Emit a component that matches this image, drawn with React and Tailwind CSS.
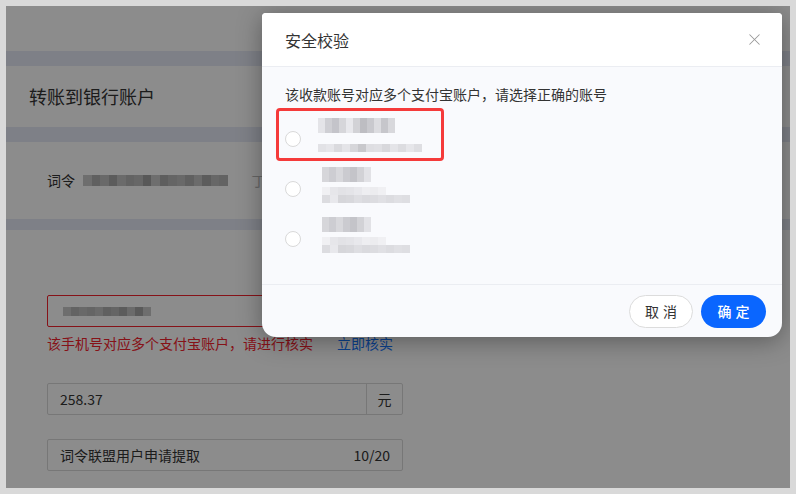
import React from "react";
import { X } from "lucide-react";

// blurred (pixelated) placeholders for masked account info
const Mosaic = ({ cells, cellClass }) => (
  <div className="flex blur-[0.6px]">
    {cells.map((c, i) => (
      <div key={i} className={`${cellClass} ${c}`}></div>
    ))}
  </div>
);

const nameA = ["bg-[#e4e4e8]", "bg-[#cfcfd4]", "bg-[#c4c4ca]", "bg-[#d6d6da]", "bg-[#e8e8ec]", "bg-[#d2d2d6]", "bg-[#bdbdc2]", "bg-[#c9c9ce]", "bg-[#dcdce0]", "bg-[#c6c6cb]", "bg-[#d8d8dc]"];
const subA = ["bg-[#e2e2e6]", "bg-[#e6e6ea]", "bg-[#dadade]", "bg-[#e4e4e8]", "bg-[#d6d6da]", "bg-[#c8c8cc]", "bg-[#dedee2]", "bg-[#e0e0e4]", "bg-[#d8d8dc]", "bg-[#e4e4e8]", "bg-[#dcdce0]", "bg-[#e6e6ea]", "bg-[#dedee2]"];
const nameB = ["bg-[#d6d6da]", "bg-[#cdcdd2]", "bg-[#d8d8dc]", "bg-[#cbcbd0]", "bg-[#c4c4c9]", "bg-[#d2d2d6]", "bg-[#e2e2e6]"];
const subB1 = ["bg-[#f0f0f3]", "bg-[#e6e6ea]", "bg-[#e2e2e6]", "bg-[#e4e4e8]", "bg-[#e8e8ec]", "bg-[#eeeef1]", "bg-[#ececef]", "bg-[#f0f0f3]"];
const subB2 = ["bg-[#dcdce0]", "bg-[#e8e8ec]", "bg-[#d6d6da]", "bg-[#d8d8dc]", "bg-[#dedee2]", "bg-[#dadade]", "bg-[#dcdce0]", "bg-[#e0e0e4]", "bg-[#dcdce0]", "bg-[#e0e0e4]", "bg-[#dedee2]"];

const pageMask = ["bg-[#c8c8c8]", "bg-[#b0b0b0]", "bg-[#c0c0c0]", "bg-[#a8a8a8]", "bg-[#c4c4c4]", "bg-[#b4b4b4]", "bg-[#bcbcbc]", "bg-[#a0a0a0]", "bg-[#c8c8c8]", "bg-[#acacac]", "bg-[#b8b8b8]", "bg-[#c0c0c0]", "bg-[#b0b0b0]", "bg-[#c4c4c4]", "bg-[#a8a8a8]", "bg-[#bcbcbc]", "bg-[#b4b4b4]"];
const phoneMask = ["bg-[#c8c8c8]", "bg-[#b4b4b4]", "bg-[#c0c0c0]", "bg-[#b8b8b8]", "bg-[#c4c4c4]", "bg-[#b0b0b0]", "bg-[#b8b8b8]", "bg-[#a8a8a8]", "bg-[#c4c4c4]", "bg-[#a4a4a4]", "bg-[#c8c8c8]"];

const accounts = [
  { id: 1, name: nameA, sub: [subA], indent: "pl-[17px] gap-[11px]" },
  { id: 2, name: nameB, sub: [subB1, subB2], indent: "pl-[21px] gap-[5px]" },
  { id: 3, name: nameB, sub: [subB1, subB2], indent: "pl-[21px] gap-[5px]" },
];

const App = () => {
  return (
    <div className="w-[796px] h-[494px] bg-[#d9d9d9] p-[6px] font-['Noto_Sans_CJK_SC','Liberation_Sans',sans-serif]">
      <div className="relative w-full h-full bg-white overflow-hidden">
        {/* page behind the dialog */}
        <div className="flex flex-col h-full">
          <div className="h-[45px]"></div>
          <div className="h-[15px] bg-[#e5eaf6]"></div>
          <div className="h-[61px] flex items-center pl-[23px]">
            <h1 className="text-[18px] text-[#333]">转账到银行账户</h1>
          </div>
          <div className="h-[15px] bg-[#e5eaf6]"></div>
          <div className="h-[77px] flex items-center pl-[41px] gap-[8px]">
            <span className="text-[14px] text-[#333]">词令</span>
            <Mosaic cells={pageMask} cellClass="w-[8.5px] h-[11px]" />
            <span className="ml-[16px] text-[14px] text-[#bbb]">丁</span>
          </div>
          <div className="h-[11px] bg-[#e5eaf6]"></div>
          <div className="flex flex-col pl-[41px] pt-[65px]">
            <div className="w-[356px] h-[32px] border border-[#f5222d] rounded-[2px] flex items-center pl-[15px]">
              <Mosaic cells={phoneMask} cellClass="w-[8px] h-[9px]" />
            </div>
            <div className="flex items-center h-[32px] text-[14px]">
              <span className="text-[#f5222d]">该手机号对应多个支付宝账户，请进行核实</span>
              <span className="ml-[24px] text-[#1677ff]">立即核实</span>
            </div>
            <div className="mt-[24px] w-[356px] h-[32px] border border-[#d9d9d9] rounded-[2px] flex">
              <div className="flex-1 flex items-center pl-[12px] text-[14px] text-[#333]">258.37</div>
              <div className="w-[36px] border-l border-[#d9d9d9] flex items-center justify-center text-[14px] text-[#333]">元</div>
            </div>
            <div className="mt-[24px] w-[356px] h-[32px] border border-[#d9d9d9] rounded-[2px] flex items-center justify-between px-[12px] text-[14px] text-[#333]">
              <span>词令联盟用户申请提取</span>
              <span>10/20</span>
            </div>
          </div>
        </div>

        {/* mask */}
        <div className="absolute inset-0 bg-black/45"></div>

        {/* dialog */}
        <div className="absolute left-[256px] top-[7px] w-[520px] h-[324px] bg-[#f9fafd] rounded-t-[4px] rounded-b-[14px] shadow-[0_4px_24px_rgba(0,0,0,0.35)] flex flex-col overflow-hidden">
          <div className="h-[54px] shrink-0 bg-white border-b border-[#ebedf2] flex items-center justify-between pl-[23px] pr-[18px]">
            <span className="text-[16px] text-[#333]">安全校验</span>
            <X size={19} strokeWidth={1.3} className="text-[#999]" />
          </div>
          <div className="relative flex-1 flex flex-col px-[23px] pt-[17px]">
            <p className="text-[14px] leading-[20px] text-[#333]">该收款账号对应多个支付宝账户，请选择正确的账号</p>
            <div className="flex flex-col mt-[6px]">
              {accounts.map((a) => (
                <div key={a.id} className="h-[50px] flex items-center">
                  <div className="mt-[8px] w-[16px] h-[16px] rounded-full border border-[#d9d9d9] bg-white shrink-0"></div>
                  <div className={`flex flex-col ${a.indent}`}>
                    <Mosaic cells={a.name} cellClass="w-[7px] h-[15px]" />
                    <div className="flex flex-col">
                      {a.sub.map((row, i) => (
                        <Mosaic key={i} cells={row} cellClass="w-[8px] h-[8px]" />
                      ))}
                    </div>
                  </div>
                </div>
              ))}
            </div>
            {/* highlight annotation */}
            <div className="absolute left-[14px] top-[41px] w-[168px] h-[53px] border-[3px] border-[#f53a3a] rounded-[4px]"></div>
          </div>
          <div className="h-[53px] shrink-0 border-t border-[#ebedf2] flex items-start justify-end gap-[8px] pt-[10px] pr-[16px]">
            <button className="w-[64px] h-[33px] rounded-full border border-[#dcdcdc] bg-white text-[14px] text-[#333] tracking-[4px] pl-[4px]">取消</button>
            <button className="w-[65px] h-[33px] rounded-full bg-[#0a66ff] text-[14px] text-white font-medium tracking-[4px] pl-[4px]">确定</button>
          </div>
        </div>
      </div>
    </div>
  );
};

export default App;
